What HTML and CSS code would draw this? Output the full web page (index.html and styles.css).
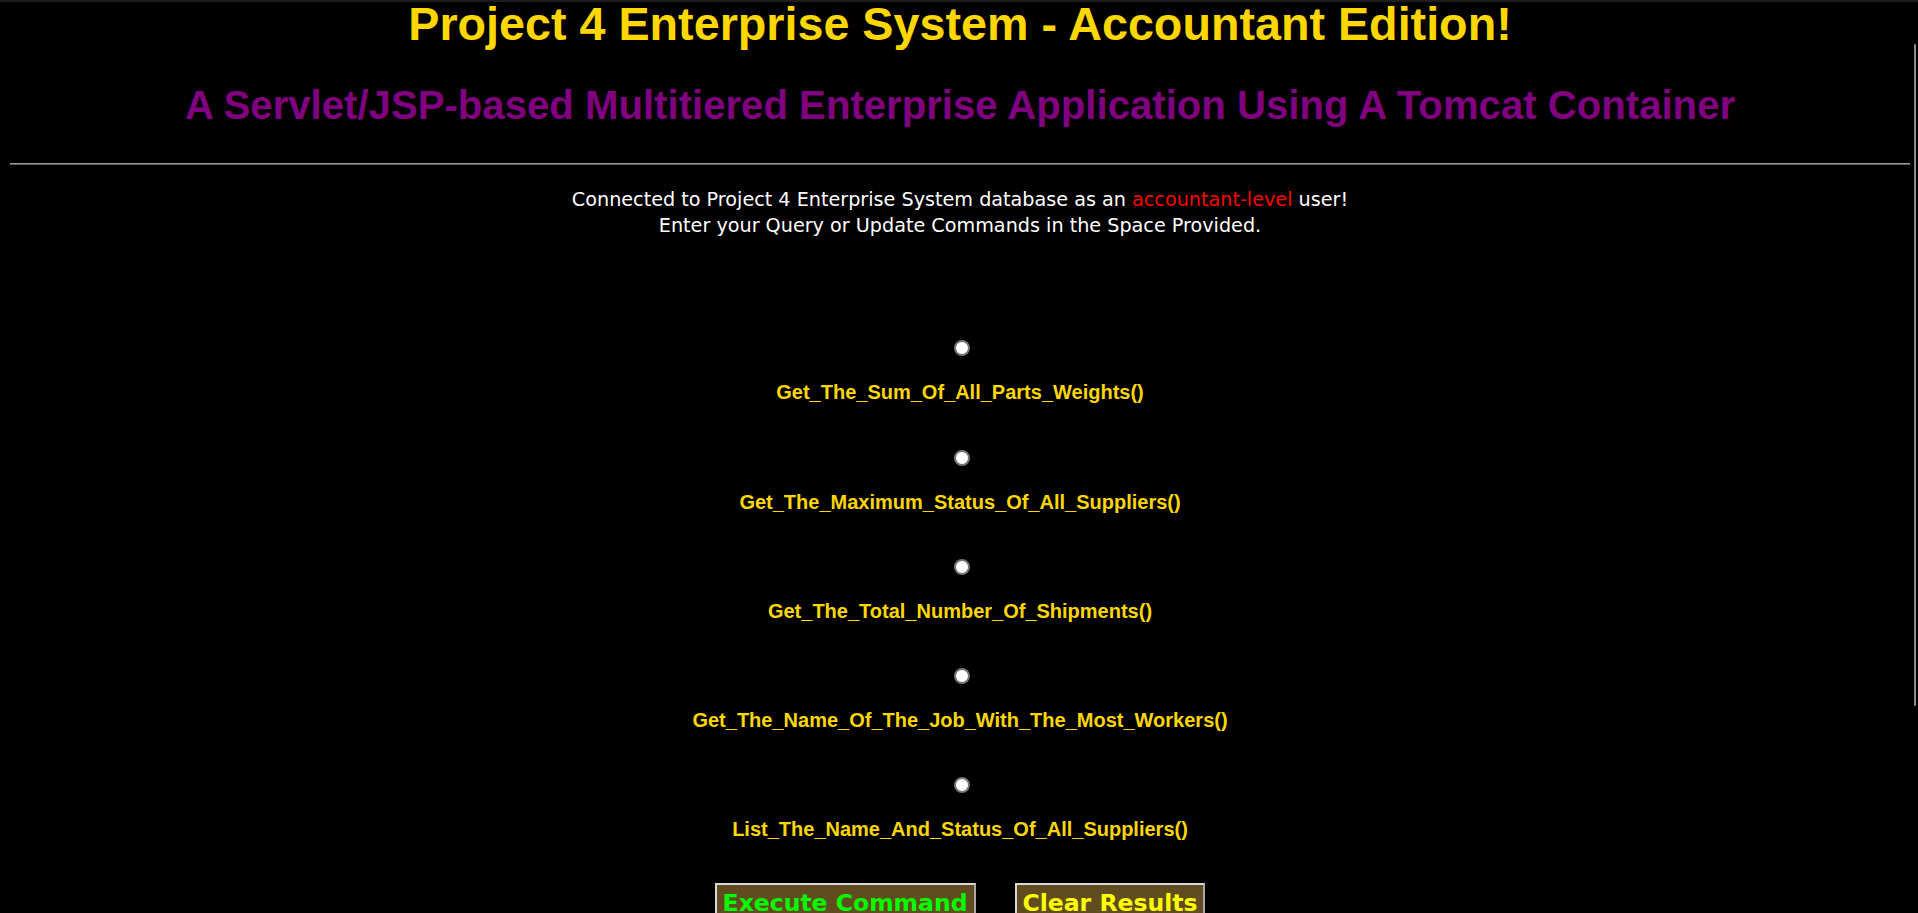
FILE: index.html
```html
<!DOCTYPE html>
<html lang="en">
<head>
<meta charset="utf-8">
<title>Project 4 Enterprise System - Accountant Edition</title>
<link rel="stylesheet" href="styles.css">
</head>
<body>
<div class="topline"></div>
<header class="header">
  <h1 class="title">Project 4 Enterprise System - Accountant Edition!</h1>
  <h2 class="subtitle">A Servlet/JSP-based Multitiered Enterprise Application Using A Tomcat Container</h2>
</header>
<hr class="rule">
<p class="intro">Connected to Project 4 Enterprise System database as an <span class="role">accountant-level</span> user!<br>Enter your Query or Update Commands in the Space Provided.</p>
<form class="commands">
  <div class="option">
    <input type="radio" name="cmd" id="c1" class="radio">
    <label for="c1" class="label">Get_The_Sum_Of_All_Parts_Weights()</label>
  </div>
  <div class="option">
    <input type="radio" name="cmd" id="c2" class="radio">
    <label for="c2" class="label">Get_The_Maximum_Status_Of_All_Suppliers()</label>
  </div>
  <div class="option">
    <input type="radio" name="cmd" id="c3" class="radio">
    <label for="c3" class="label">Get_The_Total_Number_Of_Shipments()</label>
  </div>
  <div class="option">
    <input type="radio" name="cmd" id="c4" class="radio">
    <label for="c4" class="label">Get_The_Name_Of_The_Job_With_The_Most_Workers()</label>
  </div>
  <div class="option">
    <input type="radio" name="cmd" id="c5" class="radio">
    <label for="c5" class="label">List_The_Name_And_Status_Of_All_Suppliers()</label>
  </div>
  <div class="actions">
    <button type="submit" class="btn btn-exec">Execute Command</button>
    <button type="reset" class="btn btn-clear">Clear Results</button>
  </div>
</form>
<div class="scroll-thumb"></div>
</body>
</html>
```
FILE: styles.css
```css
html {
  background: #000;
  overflow: hidden;
}

body {
  margin: 0;
  padding: 0 8px 0 10px;
  background: #000;
  font-family: "Liberation Sans", Arial, sans-serif;
}

.topline {
  position: fixed;
  top: 0;
  left: 0;
  right: 0;
  height: 2px;
  background: #1c1c1c;
}

.title {
  margin: 0;
  padding-top: 1px;
  font-size: 46.7px;
  line-height: 46px;
  font-weight: bold;
  color: #ffd700;
  text-align: center;
}

.subtitle {
  margin: 39px 0 0;
  font-size: 40.15px;
  line-height: 40px;
  font-weight: bold;
  color: #800080;
  text-align: center;
}

.rule {
  margin: 37px 0 0;
  height: 0;
  border: 0;
  border-top: 1px solid #9a9a9a;
  border-bottom: 1px solid #5c5c5c;
}

.intro {
  margin: 21.8px 0 0;
  font-family: "DejaVu Sans", Verdana, sans-serif;
  font-size: 19.2px;
  line-height: 26.5px;
  color: #fff;
  text-align: center;
}

.role {
  color: #ff0000;
}

.commands {
  margin: 100.7px 0 0;
  display: flex;
  flex-direction: column;
  align-items: center;
  gap: 45.25px;
}

.option {
  display: flex;
  flex-direction: column;
  align-items: center;
}

.radio {
  appearance: none;
  -webkit-appearance: none;
  box-sizing: border-box;
  width: 16px;
  height: 16px;
  margin: 0 0 0 4px;
  border: 2px solid #767676;
  border-radius: 50%;
  background: #fff;
}

.label {
  margin-top: 25px;
  font-size: 20px;
  line-height: 23px;
  font-weight: bold;
  color: #ffd700;
}

.actions {
  display: flex;
  justify-content: center;
  gap: 39px;
  margin-top: -4px;
}

.btn {
  font-family: "DejaVu Sans", Verdana, sans-serif;
  font-weight: bold;
  font-size: 23.5px;
  padding: 4px 6px;
  border: 2px solid;
  border-color: #d8d8d8 #a8a8a8 #888 #d8d8d8;
  background: #614c1f;
}

.btn-exec {
  color: #00ff00;
}

.btn-clear {
  color: #ffff00;
}

.scroll-thumb {
  position: fixed;
  top: 44px;
  right: 2px;
  width: 2px;
  height: 662px;
  background: #8a8a8a;
  border-radius: 1px;
}
```
